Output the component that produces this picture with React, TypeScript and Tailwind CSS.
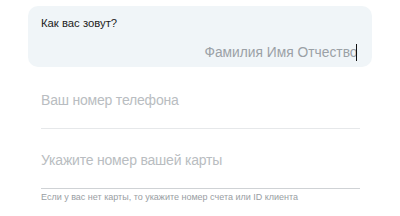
export default function App() {
  return (
    <div className="w-[400px] h-[216px] bg-white pt-[6px] font-['Liberation_Sans',Arial,sans-serif]">
      {/* Name field */}
      <div className="mx-[28px] h-[61px] rounded-[10px] bg-[#f0f5f8] px-[13px] pt-[11px]">
        <p className="text-[11.3px] leading-[13px] text-[#222]">Как вас зовут?</p>
        <div className="mt-[14px] flex items-center justify-end pr-[2px]">
          <span className="text-[13.8px] leading-[16px] text-[#9ba1a6]">Фамилия Имя Отчество</span>
          <span className="ml-[-2px] h-[17px] w-[1.5px] bg-[#111]" />
        </div>
      </div>

      {/* Phone */}
      <div className="ml-[41px] mr-[40px] mt-[24px] border-b border-[#e6e8ea] pb-[19px]">
        <p className="text-[14px] leading-[18px] tracking-[-0.2px] text-[#b9bdc1]">Ваш номер телефона</p>
      </div>

      {/* Card number */}
      <div className="ml-[41px] mr-[40px] mt-[22px] border-b border-[#cfd2d5] pb-[19px]">
        <p className="text-[14px] leading-[18px] tracking-[-0.2px] text-[#b9bdc1]">Укажите номер вашей карты</p>
      </div>
      <p className="ml-[41px] mt-[3px] text-[9px] leading-[11px] text-[#999ea3]">
        Если у вас нет карты, то укажите номер счета или ID клиента
      </p>
    </div>
  );
}
